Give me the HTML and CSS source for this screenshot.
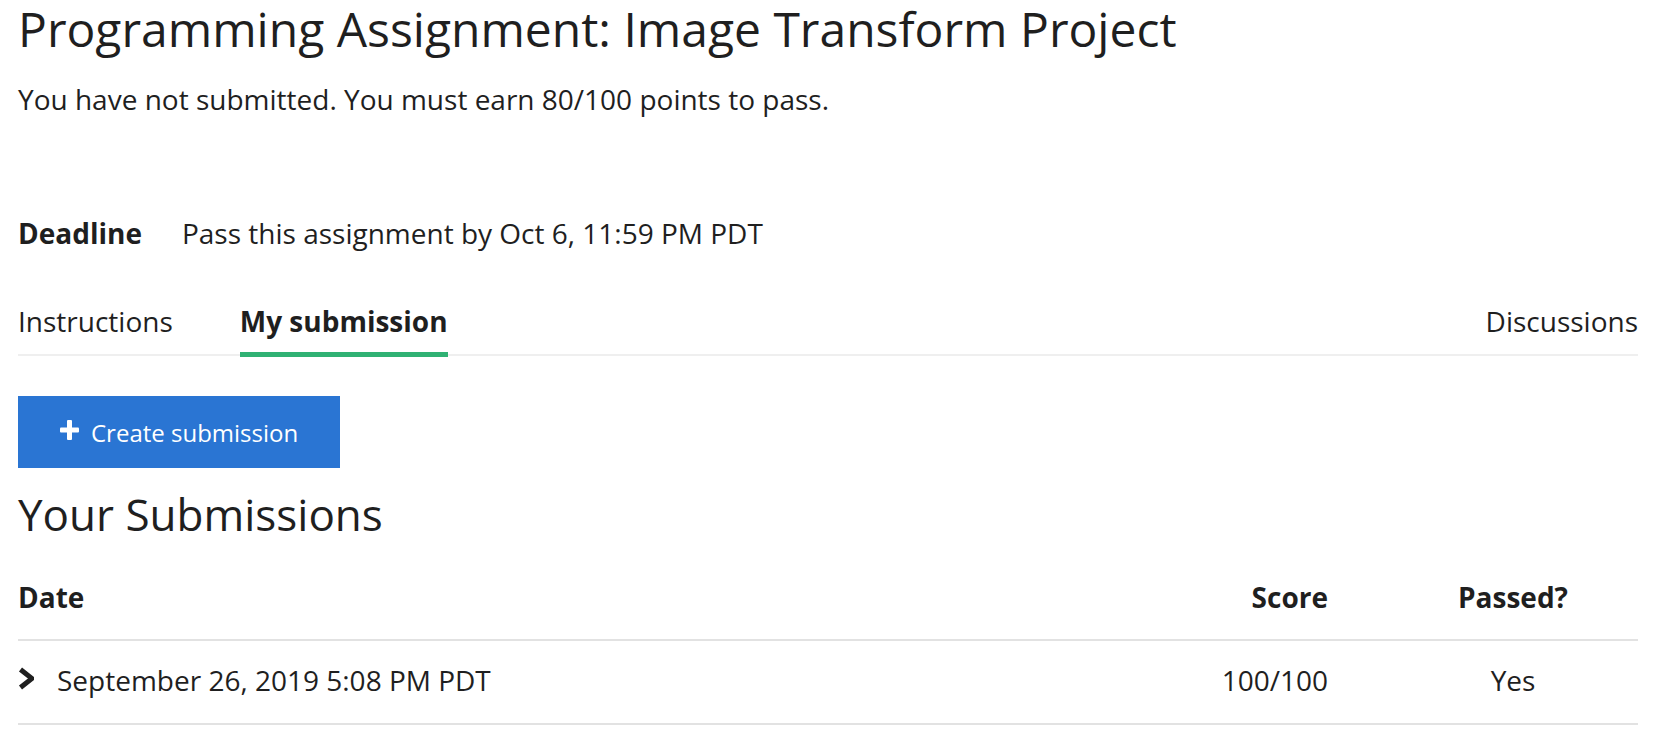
FILE: index.html
```html
<!DOCTYPE html>
<html lang="en">
<head>
<meta charset="utf-8">
<title>Programming Assignment: Image Transform Project</title>
<link rel="stylesheet" href="styles.css">
</head>
<body>
<main class="page">
  <h1 class="title">Programming Assignment: Image Transform Project</h1>
  <p class="subtitle">You have not submitted. You must earn 80/100 points to pass.</p>

  <div class="deadline">
    <span class="deadline-label">Deadline</span>
    <span class="deadline-value">Pass this assignment by Oct 6, 11:59 PM PDT</span>
  </div>

  <nav class="tabs">
    <a class="tab">Instructions</a>
    <a class="tab tab-active">My submission</a>
    <a class="tab tab-right">Discussions</a>
  </nav>

  <button class="btn-create" type="button">
    <svg class="plus" width="19" height="20" viewBox="0 0 19 20" aria-hidden="true">
      <rect x="7" y="0" width="5" height="20" rx="1" fill="#fff"/>
      <rect x="0" y="7.5" width="19" height="5" rx="1" fill="#fff"/>
    </svg>
    <span>Create submission</span>
  </button>

  <h2 class="section-title">Your Submissions</h2>

  <div class="table">
    <div class="row row-head">
      <div class="cell cell-date">Date</div>
      <div class="cell cell-score">Score</div>
      <div class="cell cell-passed">Passed?</div>
    </div>
    <div class="row">
      <div class="cell cell-date">
        <svg class="chevron" width="16" height="23" viewBox="0 0 16 23" aria-hidden="true">
          <polyline points="2.5,2.5 14,11.5 2.5,20.5" fill="none" stroke="#1f1f1f" stroke-width="5" stroke-linejoin="miter" stroke-miterlimit="2"/>
        </svg>
        <span>September 26, 2019 5:08 PM PDT</span>
      </div>
      <div class="cell cell-score">100/100</div>
      <div class="cell cell-passed">Yes</div>
    </div>
  </div>
</main>
</body>
</html>
```

FILE: styles.css
```css
html, body {
  margin: 0;
  padding: 0;
  background: #fff;
}

body {
  font-family: "Open Sans", "Liberation Sans", sans-serif;
  color: #1f1f1f;
}

.page {
  width: 1620px;
  margin-left: 18px;
}

.title {
  margin: 0;
  font-size: 48px;
  line-height: 58px;
  font-weight: 400;
}

.subtitle {
  margin: 21px 0 0;
  font-size: 28px;
  line-height: 40px;
}

.deadline {
  margin-top: 94px;
  display: flex;
  gap: 40px;
  font-size: 28px;
  line-height: 40px;
}

.deadline-label {
  font-weight: 700;
}

.tabs {
  margin-top: 48px;
  display: flex;
  gap: 67px;
  border-bottom: 2px solid #efefef;
  font-size: 28px;
  line-height: 40px;
}

.tab {
  padding-bottom: 13px;
  color: #1f1f1f;
}

.tab-active {
  font-weight: 700;
  padding-bottom: 11px;
  border-bottom: 5px solid #2fb173;
  margin-bottom: -3px;
}

.tab-right {
  margin-left: auto;
}

.btn-create {
  margin-top: 40px;
  height: 72px;
  padding: 0 42px;
  display: flex;
  align-items: center;
  gap: 12px;
  background: #2a75d3;
  border: none;
  border-radius: 0;
  color: #fff;
  font-family: "Open Sans", "Liberation Sans", sans-serif;
  font-size: 24px;
}

.plus {
  display: block;
  margin-top: -5px;
}

.section-title {
  margin: 18px 0 0;
  font-size: 44px;
  line-height: 56px;
  font-weight: 400;
}

.table {
  margin-top: 35px;
}

.row {
  display: grid;
  grid-template-columns: 1fr 260px 250px;
  font-size: 28px;
  line-height: 40px;
  padding: 19px 0 23px;
  border-bottom: 2px solid #e2e2e2;
}

.row-head {
  font-weight: 700;
  padding: 0 0 22px;
}

.cell-date {
  display: flex;
  align-items: center;
  gap: 23px;
}

.chevron {
  display: block;
  margin-top: -4px;
}

.cell-score {
  text-align: right;
  padding-right: 60px;
}

.cell-passed {
  text-align: center;
}
```
